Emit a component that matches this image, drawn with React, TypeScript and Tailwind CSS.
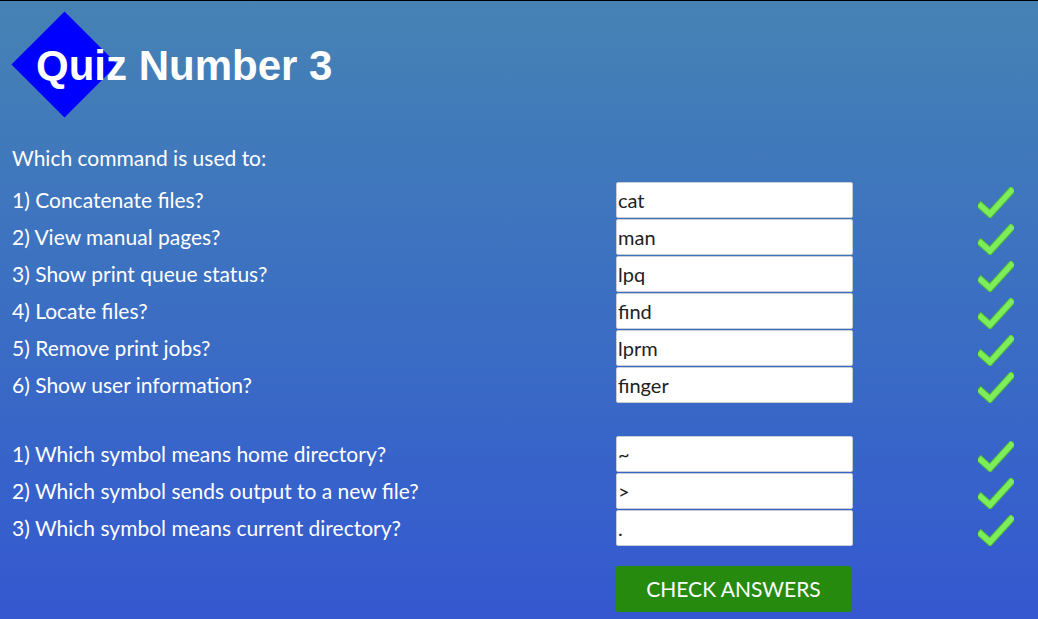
const commands = [
  { q: '1) Concatenate files?', a: 'cat' },
  { q: '2) View manual pages?', a: 'man' },
  { q: '3) Show print queue status?', a: 'lpq' },
  { q: '4) Locate files?', a: 'find' },
  { q: '5) Remove print jobs?', a: 'lprm' },
  { q: '6) Show user information?', a: 'finger' },
]

const symbols = [
  { q: '1) Which symbol means home directory?', a: '~' },
  { q: '2) Which symbol sends output to a new file?', a: '>' },
  { q: '3) Which symbol means current directory?', a: '.' },
]

function Check() {
  return (
    <svg width="36" height="31" viewBox="0 0 36 31" className="block">
      <polyline points="3,19 12,27 33,4" fill="none" stroke="#4fb83a" strokeWidth="7.5" strokeLinejoin="miter" strokeLinecap="square" />
      <polyline points="3,19 12,27 33,4" fill="none" stroke="#7ded5a" strokeWidth="5.5" strokeLinejoin="miter" strokeLinecap="square" />
    </svg>
  )
}

function Row({ q, a }: { q: string; a: string }) {
  return (
    <div className="grid grid-cols-[604px_237px_1fr] h-[36px] items-center">
      <div className="text-white">{q}</div>
      <input
        readOnly
        value={a}
        className="h-[36px] w-[237px] bg-white border border-[#c8cdd6] rounded-[2px] pl-[1px] text-[20px] text-[#222] font-['Lato'] outline-none"
      />
      <div className="pl-[125px] self-end">
        <Check />
      </div>
    </div>
  )
}

export default function App() {
  return (
    <div className="h-screen w-full overflow-hidden border-t border-black bg-gradient-to-b from-[#4682b4] to-[#3557d0] font-['Lato',sans-serif] text-[21px]">
      {/* Header */}
      <div className="relative h-[142px]">
        <div className="absolute left-[27px] top-[26px] w-[75px] h-[75px] bg-[#0000ff] rotate-45" />
        <h1 className="relative pt-[44px] pl-[36px] text-[42px] leading-none font-bold text-white font-['Liberation_Sans',Arial,sans-serif]">
          Quiz Number 3
        </h1>
      </div>

      <div className="pl-3">
        <p className="h-[30px] leading-[30px] text-white">Which command is used to:</p>

        <div className="mt-[9px] flex flex-col gap-[1px]">
          {commands.map((c) => (
            <Row key={c.q} q={c.q} a={c.a} />
          ))}
        </div>

        <div className="mt-[33px] flex flex-col gap-[1px]">
          {symbols.map((c) => (
            <Row key={c.q} q={c.q} a={c.a} />
          ))}
        </div>

        <div className="mt-[20px] pl-[604px]">
          <button className="h-[46px] w-[235px] bg-[#268a0e] rounded-[2px] text-white uppercase text-[21px]">
            Check Answers
          </button>
        </div>
      </div>
    </div>
  )
}
